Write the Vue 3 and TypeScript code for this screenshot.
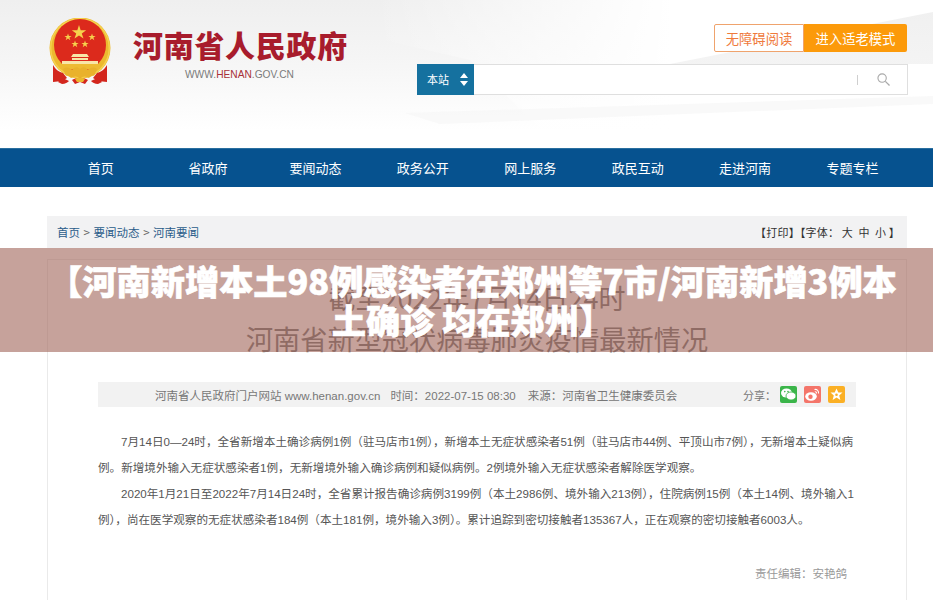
<script setup lang="ts">
const navItems: string[] = ['首页', '省政府', '要闻动态', '政务公开', '网上服务', '政民互动', '走进河南', '专题专栏']
</script>

<template>
  <div class="page">
    <header class="header">
      <div class="shade shade-a"></div>
      <div class="shade shade-b"></div>
      <div class="shade shade-c"></div>
      <div class="brand">
        <svg class="emblem" viewBox="0 0 64 68" aria-hidden="true">
          <circle cx="32" cy="30" r="30.500" fill="#ecb92f" />
          <circle cx="32" cy="30" r="29.300" fill="none" stroke="#f6d24f" stroke-width="1.400" />
          <circle cx="32" cy="27" r="26" fill="#dc2a1c" />
          <path d="M31 7l1.700 5.200h5.500l-4.400 3.200 1.700 5.200-4.500-3.200-4.500 3.200 1.700-5.200-4.400-3.200h5.500Z" fill="#f6d14c" />
          <path d="M20 15.500l.9 2.500h2.700l-2.200 1.600.9 2.600-2.300-1.600-2.300 1.600.9-2.600-2.200-1.600h2.700Z" fill="#f6d14c" />
          <path d="M44 15.500l.9 2.500h2.700l-2.200 1.600.9 2.600-2.300-1.600-2.300 1.600.9-2.600-2.200-1.600h2.700Z" fill="#f6d14c" />
          <path d="M27 22.500l.9 2.500h2.700l-2.200 1.600.9 2.600-2.300-1.600-2.300 1.600.9-2.600-2.200-1.600h2.700Z" fill="#f6d14c" />
          <path d="M37 22.500l.9 2.500h2.700l-2.200 1.600.9 2.600-2.300-1.600-2.300 1.600.9-2.600-2.200-1.600h2.700Z" fill="#f6d14c" />
          <path d="M25 36h14l2 3H23Zm-1 4h16v2H24Zm-10 3h36v3H14Z" fill="#f8e6a8" />
          <path d="M12 46h40v5H12Z" fill="#eebb33" />
          <path d="M5 47c3 5 6 7 10 8l4 5-5 3-9 1Zm54 0c-3 5-6 7-10 8l-4 5 5 3 9 1Z" fill="#d3261d" />
          <path d="M15 51c4-3 7-1 9 1 2-3 5-4 8-1 3-3 6-2 8 1 2-2 5-4 9-1l-3 7c-2-1-3 0-5 2-3-2-6-2-9 0-3-2-6-2-9 0-2-2-3-3-5-2Z" fill="#e9b22c" />
          <path d="M14 60c3 1 5 2 7 3-1 1-4 3-7 3l-4-2Zm36 0c-3 1-5 2-7 3 1 1 4 3 7 3l4-2ZM24 62c5-3 11-3 16 0l-3 4-5-2-5 2Z" fill="#d3261d" />
          <path d="M27 61c3-2 7-2 10 0l-2 3h-6Z" fill="#ecb92f" />
        </svg>
        <div class="brand-text">
          <div class="site-name">河南省人民政府</div>
          <div class="site-url">WWW.<b>HENAN</b>.GOV.CN</div>
        </div>
      </div>
      <div class="tools">
        <div class="mode-btns">
          <span class="btn-outline">无障碍阅读</span>
          <span class="btn-fill">进入适老模式</span>
        </div>
        <div class="search">
          <div class="scope">
            <span>本站</span>
            <svg width="8" height="13" viewBox="0 0 8 13" aria-hidden="true">
              <path d="M4 0l4 5H0ZM0 8h8l-4 5Z" fill="#fff" />
            </svg>
          </div>
          <div class="search-field"></div>
          <i class="search-sep"></i>
          <svg class="search-icon" width="13" height="13" viewBox="0 0 14 14" aria-hidden="true">
            <circle cx="5.500" cy="5.500" r="4.500" fill="none" stroke="#a9a9a9" stroke-width="1.200" />
            <path d="M9 9l4.500 4.500" stroke="#a9a9a9" stroke-width="1.400" />
          </svg>
        </div>
      </div>
    </header>

    <nav class="nav">
      <a v-for="item in navItems" :key="item" class="nav-item">{{ item }}</a>
    </nav>

    <main class="main">
      <div class="crumbs">
        <div class="crumb-links">首页 <em>&gt;</em> 要闻动态 <em>&gt;</em> 河南要闻</div>
        <div class="crumb-tools">【打印】【字体：&nbsp;大&nbsp;&nbsp;中&nbsp;&nbsp;小&nbsp;】</div>
      </div>

      <article class="card">
        <h2 class="subtitle">截至2022年7月14日24时</h2>
        <h1 class="title">河南省新型冠状病毒肺炎疫情最新情况</h1>
        <div class="meta">
          <div class="meta-text">河南省人民政府门户网站 www.henan.gov.cn<span>时间：2022-07-15 08:30</span><span>来源：河南省卫生健康委员会</span></div>
          <div class="share">
            <span class="share-label">分享：</span>
            <span class="share-icon wechat">
              <svg width="15" height="13" viewBox="0 0 15 13" aria-hidden="true">
                <ellipse cx="5.500" cy="5" rx="5.500" ry="4.600" fill="#fff" />
                <ellipse cx="10" cy="8" rx="5" ry="4" fill="#fff" stroke="#3bb54a" stroke-width=".8" />
                <circle cx="3.800" cy="3.600" r=".8" fill="#3bb54a" />
                <circle cx="7" cy="3.600" r=".8" fill="#3bb54a" />
              </svg>
            </span>
            <span class="share-icon weibo">
              <svg width="15" height="13" viewBox="0 0 15 13" aria-hidden="true">
                <ellipse cx="6" cy="8.500" rx="5.800" ry="4.200" fill="#fff" />
                <circle cx="5.500" cy="8.800" r="2.200" fill="#f4756a" />
                <path d="M9.500 1.500c2.500-.5 4.500 1.500 4 4M9.800 3.800c1.200-.2 1.900.6 1.700 1.700" fill="none" stroke="#fff" stroke-width="1.100" />
              </svg>
            </span>
            <span class="share-icon star">
              <svg width="13" height="13" viewBox="0 0 13 13" aria-hidden="true">
                <path d="M6.500.5l1.800 4h4.200L9.200 7.400l1.200 4.600-3.900-2.500L2.600 12l1.200-4.600L.5 4.500h4.200Z" fill="#fff" />
                <circle cx="6.500" cy="6.800" r="1.300" fill="#fbb025" />
              </svg>
            </span>
          </div>
        </div>
        <div class="body">
          <p>7月14日0—24时，全省新增本土确诊病例1例（驻马店市1例），新增本土无症状感染者51例（驻马店市44例、平顶山市7例），无新增本土疑似病例。新增境外输入无症状感染者1例，无新增境外输入确诊病例和疑似病例。2例境外输入无症状感染者解除医学观察。</p>
          <p>2020年1月21日至2022年7月14日24时，全省累计报告确诊病例3199例（本土2986例、境外输入213例），住院病例15例（本土14例、境外输入1例），尚在医学观察的无症状感染者184例（本土181例，境外输入3例）。累计追踪到密切接触者135367人，正在观察的密切接触者6003人。</p>
        </div>
        <div class="editor">责任编辑：安艳鸽</div>
      </article>
    </main>

    <div class="overlay">
      <div class="overlay-title">【河南新增本土98例感染者在郑州等7市/河南新增3例本土确诊 均在郑州】</div>
    </div>
  </div>
</template>

<style>
html, body { margin: 0; background: #fff; overflow: hidden; }
</style>

<style scoped>
.page {
  position: relative;
  width: 933px;
  height: 600px;
  overflow: hidden;
  background: #fff;
  font-family: "Liberation Sans", "Noto Sans CJK SC", sans-serif;
}
.header {
  position: relative;
  height: 148px;
  display: flex;
  justify-content: space-between;
  background: linear-gradient(180deg, #efefef 0%, #f6f6f6 45%, #fff 88%);
  overflow: hidden;
}
.shade { position: absolute; inset: 0; }
.shade-a {
  background: linear-gradient(90deg, rgba(255, 255, 255, 0) 40%, #fff 72%);
  clip-path: polygon(210px 0, 933px 0, 933px 148px, 560px 148px, 470px 60px);
}
.shade-b {
  background: linear-gradient(180deg, #e9e9e9, #f6f6f6);
  opacity: .7;
  clip-path: polygon(670px 64px, 933px 12px, 933px 64px);
}
.shade-c {
  background: #f7f7f7;
  opacity: .7;
  clip-path: polygon(405px 113px, 933px 96px, 933px 104px, 440px 124px);
}
.brand {
  position: relative;
  display: flex;
  padding: 18px 0 0 48px;
}
.emblem { width: 64px; height: 68px; }
.brand-text { margin-left: 21px; padding-top: 8px; }
.site-name {
  font: 900 30px/36px "Noto Sans CJK SC", sans-serif;
  color: #a81c2c;
  width: 214px;
  white-space: nowrap;
  letter-spacing: .7px;
}
.site-url {
  margin: 6px 0 0 52px;
  font-size: 10.200px;
  line-height: 14px;
  color: #7b7b7b;
  white-space: nowrap;
}
.site-url b { color: #a83238; font-weight: 400; }
.tools {
  position: relative;
  width: 491px;
  margin-right: 25px;
  padding-top: 24px;
  display: flex;
  flex-direction: column;
  align-items: flex-end;
  box-sizing: border-box;
}
.mode-btns { display: flex; height: 28px; margin-right: 1px; }
.mode-btns span {
  box-sizing: border-box;
  display: flex;
  align-items: center;
  justify-content: center;
  font: 13.300px "Noto Sans CJK SC", sans-serif;
  height: 28px;
}
.btn-outline {
  width: 90px;
  background: #fff;
  color: #ef7a3c;
  border: 1px solid #efa36d;
  border-radius: 2px 0 0 2px;
}
.btn-fill {
  width: 103px;
  background: #fc9a0a;
  color: #fff;
  border-radius: 0 2px 2px 0;
}
.search {
  margin-top: 12px;
  width: 491px;
  height: 31px;
  box-sizing: border-box;
  background: #fff;
  border: 1px solid #dfdfdf;
  display: flex;
  align-items: center;
}
.scope {
  width: 57px;
  height: 31px;
  margin: -1px 0 0 -1px;
  background: #15719f;
  color: #fff;
  display: flex;
  align-items: center;
  gap: 11px;
  padding-left: 10px;
  box-sizing: border-box;
  font: 11px "Noto Sans CJK SC", sans-serif;
}
.search-field { flex: 1; }
.search-sep { width: 1px; height: 10px; background: #cfcfcf; }
.search-icon { margin: 0 17px 0 19px; }
.nav {
  height: 39px;
  background: #06528f;
  border-top: 1px solid #2a6f9f;
  box-sizing: border-box;
  display: flex;
  padding: 0 0 0 47px;
}
.nav-item {
  width: 107.400px;
  text-align: center;
  color: #fff;
  font: 13px/37px "Noto Sans CJK SC", sans-serif;
}
.main {
  margin: 29px 26px 0 47px;
}
.crumbs {
  height: 32px;
  background: #f2f2f3;
  display: flex;
  justify-content: space-between;
  align-items: center;
  padding: 0 7px 0 10px;
  font: 11.500px "Noto Sans CJK SC", sans-serif;
}
.crumb-links { color: #2a5c8a; }
.crumb-links em { font-style: normal; color: #666; margin: 0 1px; }
.crumb-tools { color: #333; font-size: 11px; letter-spacing: .2px; }
.card {
  margin-top: 11px;
  height: 400px;
  border: 1px solid #eaeaea;
  border-bottom: 0;
  padding: 0 50px;
  box-sizing: border-box;
}
.subtitle {
  margin: 0;
  padding-top: 23px;
  text-align: center;
  font: 400 27px/30px "Noto Sans CJK SC", sans-serif;
  color: #777;
}
.title {
  margin: 10px 0 0;
  text-align: center;
  font: 400 27.200px/30px "Noto Sans CJK SC", sans-serif;
  color: #777;
}
.meta {
  margin-top: 29px;
  height: 25px;
  background: #f2f2f2;
  display: flex;
  justify-content: space-between;
  align-items: center;
  padding: 0 11px 0 57px;
  font-size: 11.500px;
  color: #777;
}
.meta-text span { margin-left: 10px; }
.meta-text span + span { margin-left: 12px; }
.share { display: flex; align-items: center; }
.share-label { font-size: 11px; margin-right: 4px; }
.share-icon {
  width: 17px;
  height: 17px;
  border-radius: 2px;
  margin-left: 7px;
  display: flex;
  align-items: center;
  justify-content: center;
}
.share-icon.wechat { margin-left: 0; }
.wechat { background: #3bb54a; }
.weibo { background: #f4756a; }
.star { background: #fbb025; }
.body {
  margin-top: 22px;
  font-size: 11.580px;
  line-height: 26px;
  color: #555;
}
.body p { margin: 0; text-indent: 23px; }
.editor {
  margin-top: 32px;
  text-align: right;
  padding-right: 9px;
  font-size: 11.500px;
  color: #999;
}
.overlay {
  position: absolute;
  left: 0;
  top: 248px;
  width: 933px;
  height: 104px;
  background: rgba(160, 100, 88, 0.6);
  display: flex;
  align-items: center;
  justify-content: center;
  padding: 0 0 0 12px;
  box-sizing: border-box;
}
.overlay-title {
  width: 860px;
  text-align: center;
  color: #fff;
  font: 900 34.200px/39px "Noto Sans CJK SC", sans-serif;
  -webkit-text-stroke: .6px #fff;
}
</style>
